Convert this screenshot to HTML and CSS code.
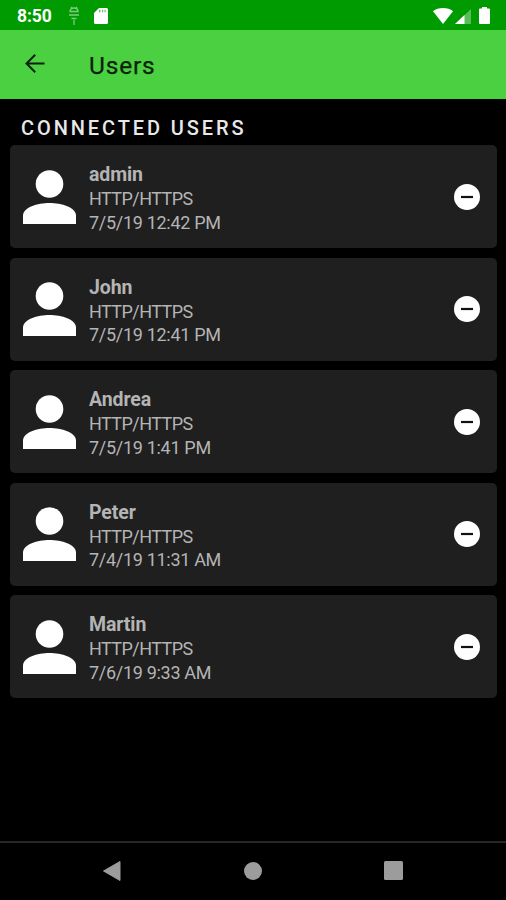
FILE: index.html
```html
<!DOCTYPE html>
<html lang="en">
<head>
  <meta charset="UTF-8">
  <meta name="viewport" content="width=device-width, initial-scale=1.0">
  <title>Users</title>
  <link rel="stylesheet" href="styles.css">
</head>
<body>
  <svg class="sprite" width="0" height="0">
    <symbol id="person" viewBox="0 0 54 54">
      <circle cx="26.500" cy="14" r="13.800"/>
      <path d="M0 54V45.500C0 37.500 14.500 33 26.500 33s26.500 4.500 26.500 12.500V54z"/>
    </symbol>
    <symbol id="remove" viewBox="0 0 26 26">
      <circle cx="13" cy="13" r="13"/>
      <path d="M7 13h12" stroke="#111" stroke-width="2.200"/>
    </symbol>
  </svg>

  <div class="screen">
    <div class="status-bar">
      <span class="clock">8:50</span>
      <svg class="debug-icon" width="12" height="20" viewBox="0 0 12 20">
        <path d="M2 5.500Q2 2 6 2t4 3.500zM1 9h10M3.500 12.500h5M6 14v5M3 1l1.500 1.500M9 1L7.500 2.500" fill="none" stroke="#fff" stroke-width="1.300"/>
      </svg>
      <svg class="sd-icon" width="14" height="16" viewBox="0 0 14 16">
        <path d="M5 0h7.500Q14 0 14 1.500v13q0 1.500-1.500 1.500h-11Q0 16 0 14.500V5z" fill="#fff"/>
        <path d="M5 3h1.500M8 3h1.200M10.500 3h1.200" stroke="#009b00" stroke-width="2.500" opacity="0.6"/>
      </svg>
      <div class="system-icons">
        <svg class="wifi-icon" width="20" height="16" viewBox="0 0 20 16">
          <path d="M0 3.200Q4 0 10 0t10 3.200L10 16z" fill="#fff"/>
        </svg>
        <svg class="signal-icon" width="16" height="15" viewBox="0 0 16 15">
          <path d="M0 15L16 0v15z" fill="#fff" opacity="0.35"/>
          <path d="M0 15L9.500 6v9z" fill="#fff"/>
        </svg>
        <svg width="11" height="17" viewBox="0 0 11 17">
          <path d="M3 0h5v1.500h2q1 0 1 1V16q0 1-1 1H1q-1 0-1-1V2.500q0-1 1-1h2z" fill="#fff"/>
        </svg>
      </div>
    </div>

    <div class="app-bar">
      <svg class="back" width="20" height="19" viewBox="0 0 20 19">
        <path d="M19.500 9.500H1.500M10.200 0.800L1.500 9.500l8.700 8.700" fill="none" stroke="#0b210a" stroke-width="2"/>
      </svg>
      <h1>Users</h1>
    </div>

    <div class="content">
      <h2 class="section-title">CONNECTED USERS</h2>
      <div class="users">
        <div class="card">
          <svg class="avatar"><use href="#person"/></svg>
          <div class="info">
            <div class="name">admin</div>
            <div class="detail protocol">HTTP/HTTPS</div>
            <div class="detail">7/5/19 12:42 PM</div>
          </div>
          <svg class="remove"><use href="#remove"/></svg>
        </div>
        <div class="card">
          <svg class="avatar"><use href="#person"/></svg>
          <div class="info">
            <div class="name">John</div>
            <div class="detail protocol">HTTP/HTTPS</div>
            <div class="detail">7/5/19 12:41 PM</div>
          </div>
          <svg class="remove"><use href="#remove"/></svg>
        </div>
        <div class="card">
          <svg class="avatar"><use href="#person"/></svg>
          <div class="info">
            <div class="name">Andrea</div>
            <div class="detail protocol">HTTP/HTTPS</div>
            <div class="detail">7/5/19 1:41 PM</div>
          </div>
          <svg class="remove"><use href="#remove"/></svg>
        </div>
        <div class="card">
          <svg class="avatar"><use href="#person"/></svg>
          <div class="info">
            <div class="name">Peter</div>
            <div class="detail protocol">HTTP/HTTPS</div>
            <div class="detail">7/4/19 11:31 AM</div>
          </div>
          <svg class="remove"><use href="#remove"/></svg>
        </div>
        <div class="card">
          <svg class="avatar"><use href="#person"/></svg>
          <div class="info">
            <div class="name">Martin</div>
            <div class="detail protocol">HTTP/HTTPS</div>
            <div class="detail">7/6/19 9:33 AM</div>
          </div>
          <svg class="remove"><use href="#remove"/></svg>
        </div>
      </div>
    </div>

    <div class="nav-bar">
      <svg width="20" height="22" viewBox="0 0 20 22">
        <path d="M1.500 11L18 1.500v19z" fill="#9c9c9c" stroke="#9c9c9c" stroke-linejoin="round"/>
      </svg>
      <svg width="18" height="18" viewBox="0 0 18 18">
        <circle cx="9" cy="9" r="9" fill="#9c9c9c"/>
      </svg>
      <svg width="19" height="19" viewBox="0 0 19 19">
        <rect width="19" height="19" rx="1.500" fill="#9c9c9c"/>
      </svg>
    </div>
  </div>
</body>
</html>
```
FILE: styles.css
```css
body {
  margin: 0;
  background-color: #000;
  font-family: Roboto, "Liberation Sans", sans-serif;
}

svg {
  display: block;
  flex-shrink: 0;
}

.sprite {
  position: absolute;
}

.screen {
  height: 900px;
  display: flex;
  flex-direction: column;
  overflow: hidden;
}

.status-bar {
  height: 30px;
  box-sizing: border-box;
  padding: 1px 16px 0 17px;
  background-color: #009b00;
  display: flex;
  align-items: center;
}

.clock {
  width: 51px;
  color: #fff;
  font-size: 17.5px;
  font-weight: 700;
  letter-spacing: -0.1px;
}

.debug-icon {
  opacity: 0.5;
}

.sd-icon {
  margin-left: 14px;
}

.system-icons {
  margin-left: auto;
  padding-bottom: 1px;
  display: flex;
  align-items: flex-end;
}

.signal-icon {
  margin: 0 8px 0 2px;
}

.app-bar {
  height: 69px;
  box-sizing: border-box;
  padding: 2px 0 0 25px;
  background-color: #4bd042;
  display: flex;
  align-items: center;
}

.back {
  margin-bottom: 4px;
}

.app-bar h1 {
  margin: 0 0 0 44px;
  color: #0b210a;
  font-size: 24.5px;
  font-weight: 400;
  letter-spacing: 0.8px;
  -webkit-text-stroke: 0.25px #0b210a;
}

.content {
  flex: 1;
  padding: 17px 9px 0 10px;
}

.section-title {
  margin: 0 0 5px 11px;
  color: #e8e8e8;
  font-size: 20px;
  line-height: 24px;
  font-weight: 500;
  letter-spacing: 2.9px;
}

.users {
  display: flex;
  flex-direction: column;
  gap: 9.5px;
}

.card {
  height: 103px;
  box-sizing: border-box;
  padding: 0 17px 0 13px;
  background-color: #1f1f1f;
  border-radius: 5px;
  display: flex;
  align-items: center;
}

.avatar {
  width: 54px;
  height: 54px;
  fill: #fff;
}

.info {
  flex: 1;
  margin-left: 12px;
  padding-top: 3px;
  color: #b4b4b4;
}

.name {
  font-size: 19.5px;
  line-height: 25px;
  font-weight: 700;
  letter-spacing: -0.1px;
}

.detail {
  font-size: 18px;
  line-height: 23.5px;
  letter-spacing: -0.3px;
}

.protocol {
  letter-spacing: -0.55px;
}

.remove {
  width: 26px;
  height: 26px;
  fill: #fff;
}

.nav-bar {
  height: 59px;
  box-sizing: border-box;
  padding: 0 103px 2px 102px;
  border-top: 2px solid #262626;
  display: flex;
  align-items: center;
  justify-content: space-between;
}
```
